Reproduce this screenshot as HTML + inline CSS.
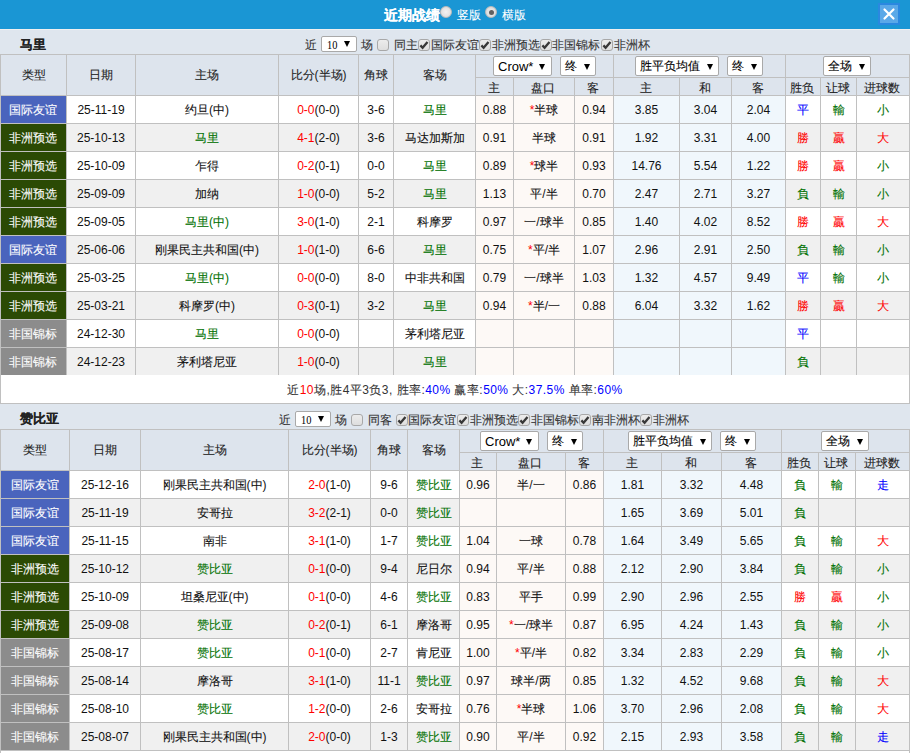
<!DOCTYPE html>
<html><head><meta charset="utf-8"><style>
html,body{margin:0;padding:0;background:#fff}
body{width:910px;height:753px;overflow:hidden;position:relative;font-family:"Liberation Sans",sans-serif;font-size:12px;color:#333}
.c{position:static;-webkit-text-stroke:0.1px currentColor}
div,span{position:absolute;white-space:nowrap}
div span,div b,div i{position:static}
b.arr{font-weight:normal;font-size:10px;position:absolute;right:5px;top:0}
i.ck{position:absolute;left:1px;top:0px;width:7px;height:4px;border-left:2px solid #444;border-bottom:2px solid #444;transform:rotate(-50deg);left:2px;top:2px}
</style></head><body>
<div style="left:0px;top:0px;width:910px;height:29px;background:#1a96d4"></div>
<span style="left:384px;top:6px;font-weight:bold;font-size:14px;color:#fff;line-height:18px"><span class="c">近期战绩</span></span>
<div style="left:440px;top:6px;width:12px;height:12px;border-radius:50%;background:radial-gradient(#f2f2f2,#d8d8d8);box-sizing:border-box;border:1px solid #bbb"></div>
<span style="left:457px;top:7px;font-size:12px;color:#fff;line-height:16px"><span class="c">竖版</span></span>
<div style="left:485px;top:6px;width:12px;height:12px;border-radius:50%;background:radial-gradient(#f0f0f0,#d4d4d4);box-sizing:border-box;border:1px solid #bbb"><i style="position:absolute;left:2.5px;top:2.5px;width:5px;height:5px;border-radius:50%;background:#606060"></i></div>
<span style="left:502px;top:7px;font-size:12px;color:#fff;line-height:16px"><span class="c">横版</span></span>
<div style="left:878px;top:3px;width:22px;height:22px;background:#5aa8e8;border:2px solid #2a88e0;box-sizing:border-box"><svg width="18" height="18" viewBox="0 0 18 18" style="position:absolute;left:0;top:0"><path d="M4.5 4.5L13.5 13.5M13.5 4.5L4.5 13.5" stroke="#fff" stroke-width="2.2" stroke-linecap="round"/></svg></div>
<div style="left:0px;top:29px;width:910px;height:1px;background:#f0f0f0"></div>
<div style="left:0px;top:30px;width:910px;height:24px;background:#dfe6ee"></div>
<span style="left:20px;top:37px;font-weight:bold;font-size:13px;color:#222;line-height:16px"><span class="c">马里</span></span>
<span style="left:305px;top:38px;font-size:12px;color:#333;line-height:14px"><span class="c">近</span></span>
<div style="left:321px;top:36px;width:36px;height:16px;background:#fff;border:1px solid #a9a9a9;border-radius:2px;box-sizing:border-box"><span style="position:absolute;left:5px;top:0px;line-height:16px;font-family:Liberation Serif,serif;font-size:13px;color:#000;display:inline-block;transform:scaleX(0.8);transform-origin:0 0">10</span><svg width="6" height="6" viewBox="0 0 6 6" style="position:absolute;left:22px;top:4px"><path d="M0 0H6L3.0 6Z" fill="#000"/></svg></div>
<span style="left:361px;top:38px;font-size:12px;color:#333;line-height:14px"><span class="c">场</span></span>
<div style="left:377px;top:39px;width:12px;height:12px;background:linear-gradient(#ececec,#dedede);border:1px solid #a8a8a8;border-radius:3px;box-sizing:border-box"></div>
<span style="left:394px;top:38px;font-size:12px;color:#333;line-height:14px"><span class="c">同主</span></span>
<div style="left:418px;top:39px;width:12px;height:12px;background:linear-gradient(#ececec,#dedede);border:1px solid #a8a8a8;border-radius:3px;box-sizing:border-box"><svg width="12" height="12" viewBox="0 0 12 12" style="position:absolute;left:-1px;top:-1px"><path d="M2.4 6.4L4.6 8.8L9.5 2.9" stroke="#383838" stroke-width="2.3" fill="none" stroke-linecap="butt" stroke-linejoin="miter"/></svg></div>
<span style="left:431px;top:38px;font-size:12px;color:#333;line-height:14px"><span class="c">国际友谊</span></span>
<div style="left:479px;top:39px;width:12px;height:12px;background:linear-gradient(#ececec,#dedede);border:1px solid #a8a8a8;border-radius:3px;box-sizing:border-box"><svg width="12" height="12" viewBox="0 0 12 12" style="position:absolute;left:-1px;top:-1px"><path d="M2.4 6.4L4.6 8.8L9.5 2.9" stroke="#383838" stroke-width="2.3" fill="none" stroke-linecap="butt" stroke-linejoin="miter"/></svg></div>
<span style="left:492px;top:38px;font-size:12px;color:#333;line-height:14px"><span class="c">非洲预选</span></span>
<div style="left:540px;top:39px;width:12px;height:12px;background:linear-gradient(#ececec,#dedede);border:1px solid #a8a8a8;border-radius:3px;box-sizing:border-box"><svg width="12" height="12" viewBox="0 0 12 12" style="position:absolute;left:-1px;top:-1px"><path d="M2.4 6.4L4.6 8.8L9.5 2.9" stroke="#383838" stroke-width="2.3" fill="none" stroke-linecap="butt" stroke-linejoin="miter"/></svg></div>
<span style="left:552px;top:38px;font-size:12px;color:#333;line-height:14px"><span class="c">非国锦标</span></span>
<div style="left:601px;top:39px;width:12px;height:12px;background:linear-gradient(#ececec,#dedede);border:1px solid #a8a8a8;border-radius:3px;box-sizing:border-box"><svg width="12" height="12" viewBox="0 0 12 12" style="position:absolute;left:-1px;top:-1px"><path d="M2.4 6.4L4.6 8.8L9.5 2.9" stroke="#383838" stroke-width="2.3" fill="none" stroke-linecap="butt" stroke-linejoin="miter"/></svg></div>
<span style="left:614px;top:38px;font-size:12px;color:#333;line-height:14px"><span class="c">非洲杯</span></span>
<div style="left:0px;top:54px;width:910px;height:41px;background:#dde4ed"></div>
<div style="left:0px;top:95px;width:910px;height:28px;background:#ffffff"></div>
<div style="left:475px;top:95px;width:138px;height:28px;background:#fdf9f6"></div>
<div style="left:613px;top:95px;width:172px;height:28px;background:#f0f7fc"></div>
<div style="left:1px;top:96px;width:65px;height:27px;background:#4a64bd"></div>
<div style="left:0px;top:123px;width:910px;height:28px;background:#f0f0f0"></div>
<div style="left:475px;top:123px;width:138px;height:28px;background:#fdf9f6"></div>
<div style="left:613px;top:123px;width:172px;height:28px;background:#f0f7fc"></div>
<div style="left:1px;top:124px;width:65px;height:27px;background:#2b4a04"></div>
<div style="left:0px;top:151px;width:910px;height:28px;background:#ffffff"></div>
<div style="left:475px;top:151px;width:138px;height:28px;background:#fdf9f6"></div>
<div style="left:613px;top:151px;width:172px;height:28px;background:#f0f7fc"></div>
<div style="left:1px;top:152px;width:65px;height:27px;background:#2b4a04"></div>
<div style="left:0px;top:179px;width:910px;height:28px;background:#f0f0f0"></div>
<div style="left:475px;top:179px;width:138px;height:28px;background:#fdf9f6"></div>
<div style="left:613px;top:179px;width:172px;height:28px;background:#f0f7fc"></div>
<div style="left:1px;top:180px;width:65px;height:27px;background:#2b4a04"></div>
<div style="left:0px;top:207px;width:910px;height:28px;background:#ffffff"></div>
<div style="left:475px;top:207px;width:138px;height:28px;background:#fdf9f6"></div>
<div style="left:613px;top:207px;width:172px;height:28px;background:#f0f7fc"></div>
<div style="left:1px;top:208px;width:65px;height:27px;background:#2b4a04"></div>
<div style="left:0px;top:235px;width:910px;height:28px;background:#f0f0f0"></div>
<div style="left:475px;top:235px;width:138px;height:28px;background:#fdf9f6"></div>
<div style="left:613px;top:235px;width:172px;height:28px;background:#f0f7fc"></div>
<div style="left:1px;top:236px;width:65px;height:27px;background:#4a64bd"></div>
<div style="left:0px;top:263px;width:910px;height:28px;background:#ffffff"></div>
<div style="left:475px;top:263px;width:138px;height:28px;background:#fdf9f6"></div>
<div style="left:613px;top:263px;width:172px;height:28px;background:#f0f7fc"></div>
<div style="left:1px;top:264px;width:65px;height:27px;background:#2b4a04"></div>
<div style="left:0px;top:291px;width:910px;height:28px;background:#f0f0f0"></div>
<div style="left:475px;top:291px;width:138px;height:28px;background:#fdf9f6"></div>
<div style="left:613px;top:291px;width:172px;height:28px;background:#f0f7fc"></div>
<div style="left:1px;top:292px;width:65px;height:27px;background:#2b4a04"></div>
<div style="left:0px;top:319px;width:910px;height:28px;background:#ffffff"></div>
<div style="left:475px;top:319px;width:138px;height:28px;background:#fdf9f6"></div>
<div style="left:613px;top:319px;width:172px;height:28px;background:#f0f7fc"></div>
<div style="left:1px;top:320px;width:65px;height:27px;background:#8c8c8c"></div>
<div style="left:0px;top:347px;width:910px;height:28px;background:#f0f0f0"></div>
<div style="left:475px;top:347px;width:138px;height:28px;background:#fdf9f6"></div>
<div style="left:613px;top:347px;width:172px;height:28px;background:#f0f7fc"></div>
<div style="left:1px;top:348px;width:65px;height:27px;background:#8c8c8c"></div>
<div style="left:0px;top:54px;width:910px;height:1px;background:#c0c0c0"></div>
<div style="left:475px;top:77px;width:434px;height:1px;background:#c0c0c0"></div>
<div style="left:0px;top:95px;width:910px;height:1px;background:#c0c0c0"></div>
<div style="left:0px;top:123px;width:910px;height:1px;background:#c0c0c0"></div>
<div style="left:0px;top:151px;width:910px;height:1px;background:#c0c0c0"></div>
<div style="left:0px;top:179px;width:910px;height:1px;background:#c0c0c0"></div>
<div style="left:0px;top:207px;width:910px;height:1px;background:#c0c0c0"></div>
<div style="left:0px;top:235px;width:910px;height:1px;background:#c0c0c0"></div>
<div style="left:0px;top:263px;width:910px;height:1px;background:#c0c0c0"></div>
<div style="left:0px;top:291px;width:910px;height:1px;background:#c0c0c0"></div>
<div style="left:0px;top:319px;width:910px;height:1px;background:#c0c0c0"></div>
<div style="left:0px;top:347px;width:910px;height:1px;background:#c0c0c0"></div>
<div style="left:0px;top:375px;width:910px;height:1px;background:#c0c0c0"></div>
<div style="left:0px;top:54px;width:1px;height:322px;background:#c0c0c0"></div>
<div style="left:66px;top:54px;width:1px;height:322px;background:#c0c0c0"></div>
<div style="left:135px;top:54px;width:1px;height:322px;background:#c0c0c0"></div>
<div style="left:278px;top:54px;width:1px;height:322px;background:#c0c0c0"></div>
<div style="left:358px;top:54px;width:1px;height:322px;background:#c0c0c0"></div>
<div style="left:393px;top:54px;width:1px;height:322px;background:#c0c0c0"></div>
<div style="left:475px;top:54px;width:1px;height:322px;background:#c0c0c0"></div>
<div style="left:513px;top:77px;width:1px;height:299px;background:#c0c0c0"></div>
<div style="left:574px;top:77px;width:1px;height:299px;background:#c0c0c0"></div>
<div style="left:613px;top:54px;width:1px;height:322px;background:#c0c0c0"></div>
<div style="left:679px;top:77px;width:1px;height:299px;background:#c0c0c0"></div>
<div style="left:731px;top:77px;width:1px;height:299px;background:#c0c0c0"></div>
<div style="left:785px;top:54px;width:1px;height:322px;background:#c0c0c0"></div>
<div style="left:820px;top:77px;width:1px;height:299px;background:#c0c0c0"></div>
<div style="left:856px;top:77px;width:1px;height:299px;background:#c0c0c0"></div>
<div style="left:909px;top:54px;width:1px;height:322px;background:#c0c0c0"></div>
<div style="left:1px;top:55px;width:65px;height:40px;line-height:40px;text-align:center;font-size:12px;color:#222"><span class="c">类型</span></div>
<div style="left:67px;top:55px;width:68px;height:40px;line-height:40px;text-align:center;font-size:12px;color:#222"><span class="c">日期</span></div>
<div style="left:136px;top:55px;width:142px;height:40px;line-height:40px;text-align:center;font-size:12px;color:#222"><span class="c">主场</span></div>
<div style="left:279px;top:55px;width:79px;height:40px;line-height:40px;text-align:center;font-size:12px;color:#222"><span class="c">比分</span>(<span class="c">半场</span>)</div>
<div style="left:359px;top:55px;width:34px;height:40px;line-height:40px;text-align:center;font-size:12px;color:#222"><span class="c">角球</span></div>
<div style="left:394px;top:55px;width:81px;height:40px;line-height:40px;text-align:center;font-size:12px;color:#222"><span class="c">客场</span></div>
<div style="left:475px;top:80px;width:37px;height:17px;line-height:17px;text-align:center;font-size:12px;color:#222"><span class="c">主</span></div>
<div style="left:513px;top:80px;width:60px;height:17px;line-height:17px;text-align:center;font-size:12px;color:#222"><span class="c">盘口</span></div>
<div style="left:574px;top:80px;width:38px;height:17px;line-height:17px;text-align:center;font-size:12px;color:#222"><span class="c">客</span></div>
<div style="left:613px;top:80px;width:65px;height:17px;line-height:17px;text-align:center;font-size:12px;color:#222"><span class="c">主</span></div>
<div style="left:679px;top:80px;width:51px;height:17px;line-height:17px;text-align:center;font-size:12px;color:#222"><span class="c">和</span></div>
<div style="left:731px;top:80px;width:53px;height:17px;line-height:17px;text-align:center;font-size:12px;color:#222"><span class="c">客</span></div>
<div style="left:785px;top:80px;width:34px;height:17px;line-height:17px;text-align:center;font-size:12px;color:#222"><span class="c">胜负</span></div>
<div style="left:820px;top:80px;width:35px;height:17px;line-height:17px;text-align:center;font-size:12px;color:#222"><span class="c">让球</span></div>
<div style="left:856px;top:80px;width:52px;height:17px;line-height:17px;text-align:center;font-size:12px;color:#222"><span class="c">进球数</span></div>
<div style="left:0px;top:97px;width:65px;height:27px;line-height:27px;text-align:center;font-size:12px;color:#fff"><span class="c">国际友谊</span></div>
<div style="left:67px;top:97px;width:68px;height:27px;line-height:27px;text-align:center;font-size:12px;color:#111">25-11-19</div>
<div style="left:136px;top:97px;width:142px;height:27px;line-height:27px;text-align:center;font-size:12px;color:#111"><span class="c">约旦</span>(<span class="c">中</span>)</div>
<div style="left:279px;top:97px;width:79px;height:27px;line-height:27px;text-align:center;font-size:12px;color:#111"><span style="color:#ff0000">0-0</span>(0-0)</div>
<div style="left:359px;top:97px;width:34px;height:27px;line-height:27px;text-align:center;font-size:12px;color:#111">3-6</div>
<div style="left:394px;top:97px;width:81px;height:27px;line-height:27px;text-align:center;font-size:12px;color:#111;color:#007000"><span class="c">马里</span></div>
<div style="left:476px;top:97px;width:37px;height:27px;line-height:27px;text-align:center;font-size:12px;color:#111">0.88</div>
<div style="left:514px;top:97px;width:60px;height:27px;line-height:27px;text-align:center;font-size:12px;color:#111"><span style="color:#ff0000">*</span><span class="c">半球</span></div>
<div style="left:575px;top:97px;width:38px;height:27px;line-height:27px;text-align:center;font-size:12px;color:#111">0.94</div>
<div style="left:614px;top:97px;width:65px;height:27px;line-height:27px;text-align:center;font-size:12px;color:#111">3.85</div>
<div style="left:680px;top:97px;width:51px;height:27px;line-height:27px;text-align:center;font-size:12px;color:#111">3.04</div>
<div style="left:732px;top:97px;width:53px;height:27px;line-height:27px;text-align:center;font-size:12px;color:#111">2.04</div>
<div style="left:786px;top:97px;width:34px;height:27px;line-height:27px;text-align:center;font-size:12px;color:#111;color:#0000ff"><span class="c">平</span></div>
<div style="left:821px;top:97px;width:35px;height:27px;line-height:27px;text-align:center;font-size:12px;color:#111;color:#007000"><span class="c">輸</span></div>
<div style="left:857px;top:97px;width:52px;height:27px;line-height:27px;text-align:center;font-size:12px;color:#111;color:#007000"><span class="c">小</span></div>
<div style="left:0px;top:125px;width:65px;height:27px;line-height:27px;text-align:center;font-size:12px;color:#fff"><span class="c">非洲预选</span></div>
<div style="left:67px;top:125px;width:68px;height:27px;line-height:27px;text-align:center;font-size:12px;color:#111">25-10-13</div>
<div style="left:136px;top:125px;width:142px;height:27px;line-height:27px;text-align:center;font-size:12px;color:#111;color:#007000"><span class="c">马里</span></div>
<div style="left:279px;top:125px;width:79px;height:27px;line-height:27px;text-align:center;font-size:12px;color:#111"><span style="color:#ff0000">4-1</span>(2-0)</div>
<div style="left:359px;top:125px;width:34px;height:27px;line-height:27px;text-align:center;font-size:12px;color:#111">3-6</div>
<div style="left:394px;top:125px;width:81px;height:27px;line-height:27px;text-align:center;font-size:12px;color:#111"><span class="c">马达加斯加</span></div>
<div style="left:476px;top:125px;width:37px;height:27px;line-height:27px;text-align:center;font-size:12px;color:#111">0.91</div>
<div style="left:514px;top:125px;width:60px;height:27px;line-height:27px;text-align:center;font-size:12px;color:#111"><span class="c">半球</span></div>
<div style="left:575px;top:125px;width:38px;height:27px;line-height:27px;text-align:center;font-size:12px;color:#111">0.91</div>
<div style="left:614px;top:125px;width:65px;height:27px;line-height:27px;text-align:center;font-size:12px;color:#111">1.92</div>
<div style="left:680px;top:125px;width:51px;height:27px;line-height:27px;text-align:center;font-size:12px;color:#111">3.31</div>
<div style="left:732px;top:125px;width:53px;height:27px;line-height:27px;text-align:center;font-size:12px;color:#111">4.00</div>
<div style="left:786px;top:125px;width:34px;height:27px;line-height:27px;text-align:center;font-size:12px;color:#111;color:#ff0000"><span class="c">勝</span></div>
<div style="left:821px;top:125px;width:35px;height:27px;line-height:27px;text-align:center;font-size:12px;color:#111;color:#ff0000"><span class="c">贏</span></div>
<div style="left:857px;top:125px;width:52px;height:27px;line-height:27px;text-align:center;font-size:12px;color:#111;color:#ff0000"><span class="c">大</span></div>
<div style="left:0px;top:153px;width:65px;height:27px;line-height:27px;text-align:center;font-size:12px;color:#fff"><span class="c">非洲预选</span></div>
<div style="left:67px;top:153px;width:68px;height:27px;line-height:27px;text-align:center;font-size:12px;color:#111">25-10-09</div>
<div style="left:136px;top:153px;width:142px;height:27px;line-height:27px;text-align:center;font-size:12px;color:#111"><span class="c">乍得</span></div>
<div style="left:279px;top:153px;width:79px;height:27px;line-height:27px;text-align:center;font-size:12px;color:#111"><span style="color:#ff0000">0-2</span>(0-1)</div>
<div style="left:359px;top:153px;width:34px;height:27px;line-height:27px;text-align:center;font-size:12px;color:#111">0-0</div>
<div style="left:394px;top:153px;width:81px;height:27px;line-height:27px;text-align:center;font-size:12px;color:#111;color:#007000"><span class="c">马里</span></div>
<div style="left:476px;top:153px;width:37px;height:27px;line-height:27px;text-align:center;font-size:12px;color:#111">0.89</div>
<div style="left:514px;top:153px;width:60px;height:27px;line-height:27px;text-align:center;font-size:12px;color:#111"><span style="color:#ff0000">*</span><span class="c">球半</span></div>
<div style="left:575px;top:153px;width:38px;height:27px;line-height:27px;text-align:center;font-size:12px;color:#111">0.93</div>
<div style="left:614px;top:153px;width:65px;height:27px;line-height:27px;text-align:center;font-size:12px;color:#111">14.76</div>
<div style="left:680px;top:153px;width:51px;height:27px;line-height:27px;text-align:center;font-size:12px;color:#111">5.54</div>
<div style="left:732px;top:153px;width:53px;height:27px;line-height:27px;text-align:center;font-size:12px;color:#111">1.22</div>
<div style="left:786px;top:153px;width:34px;height:27px;line-height:27px;text-align:center;font-size:12px;color:#111;color:#ff0000"><span class="c">勝</span></div>
<div style="left:821px;top:153px;width:35px;height:27px;line-height:27px;text-align:center;font-size:12px;color:#111;color:#ff0000"><span class="c">贏</span></div>
<div style="left:857px;top:153px;width:52px;height:27px;line-height:27px;text-align:center;font-size:12px;color:#111;color:#007000"><span class="c">小</span></div>
<div style="left:0px;top:181px;width:65px;height:27px;line-height:27px;text-align:center;font-size:12px;color:#fff"><span class="c">非洲预选</span></div>
<div style="left:67px;top:181px;width:68px;height:27px;line-height:27px;text-align:center;font-size:12px;color:#111">25-09-09</div>
<div style="left:136px;top:181px;width:142px;height:27px;line-height:27px;text-align:center;font-size:12px;color:#111"><span class="c">加纳</span></div>
<div style="left:279px;top:181px;width:79px;height:27px;line-height:27px;text-align:center;font-size:12px;color:#111"><span style="color:#ff0000">1-0</span>(0-0)</div>
<div style="left:359px;top:181px;width:34px;height:27px;line-height:27px;text-align:center;font-size:12px;color:#111">5-2</div>
<div style="left:394px;top:181px;width:81px;height:27px;line-height:27px;text-align:center;font-size:12px;color:#111;color:#007000"><span class="c">马里</span></div>
<div style="left:476px;top:181px;width:37px;height:27px;line-height:27px;text-align:center;font-size:12px;color:#111">1.13</div>
<div style="left:514px;top:181px;width:60px;height:27px;line-height:27px;text-align:center;font-size:12px;color:#111"><span class="c">平</span>/<span class="c">半</span></div>
<div style="left:575px;top:181px;width:38px;height:27px;line-height:27px;text-align:center;font-size:12px;color:#111">0.70</div>
<div style="left:614px;top:181px;width:65px;height:27px;line-height:27px;text-align:center;font-size:12px;color:#111">2.47</div>
<div style="left:680px;top:181px;width:51px;height:27px;line-height:27px;text-align:center;font-size:12px;color:#111">2.71</div>
<div style="left:732px;top:181px;width:53px;height:27px;line-height:27px;text-align:center;font-size:12px;color:#111">3.27</div>
<div style="left:786px;top:181px;width:34px;height:27px;line-height:27px;text-align:center;font-size:12px;color:#111;color:#007000"><span class="c">負</span></div>
<div style="left:821px;top:181px;width:35px;height:27px;line-height:27px;text-align:center;font-size:12px;color:#111;color:#007000"><span class="c">輸</span></div>
<div style="left:857px;top:181px;width:52px;height:27px;line-height:27px;text-align:center;font-size:12px;color:#111;color:#007000"><span class="c">小</span></div>
<div style="left:0px;top:209px;width:65px;height:27px;line-height:27px;text-align:center;font-size:12px;color:#fff"><span class="c">非洲预选</span></div>
<div style="left:67px;top:209px;width:68px;height:27px;line-height:27px;text-align:center;font-size:12px;color:#111">25-09-05</div>
<div style="left:136px;top:209px;width:142px;height:27px;line-height:27px;text-align:center;font-size:12px;color:#111;color:#007000"><span class="c">马里</span>(<span class="c">中</span>)</div>
<div style="left:279px;top:209px;width:79px;height:27px;line-height:27px;text-align:center;font-size:12px;color:#111"><span style="color:#ff0000">3-0</span>(1-0)</div>
<div style="left:359px;top:209px;width:34px;height:27px;line-height:27px;text-align:center;font-size:12px;color:#111">2-1</div>
<div style="left:394px;top:209px;width:81px;height:27px;line-height:27px;text-align:center;font-size:12px;color:#111"><span class="c">科摩罗</span></div>
<div style="left:476px;top:209px;width:37px;height:27px;line-height:27px;text-align:center;font-size:12px;color:#111">0.97</div>
<div style="left:514px;top:209px;width:60px;height:27px;line-height:27px;text-align:center;font-size:12px;color:#111"><span class="c">一</span>/<span class="c">球半</span></div>
<div style="left:575px;top:209px;width:38px;height:27px;line-height:27px;text-align:center;font-size:12px;color:#111">0.85</div>
<div style="left:614px;top:209px;width:65px;height:27px;line-height:27px;text-align:center;font-size:12px;color:#111">1.40</div>
<div style="left:680px;top:209px;width:51px;height:27px;line-height:27px;text-align:center;font-size:12px;color:#111">4.02</div>
<div style="left:732px;top:209px;width:53px;height:27px;line-height:27px;text-align:center;font-size:12px;color:#111">8.52</div>
<div style="left:786px;top:209px;width:34px;height:27px;line-height:27px;text-align:center;font-size:12px;color:#111;color:#ff0000"><span class="c">勝</span></div>
<div style="left:821px;top:209px;width:35px;height:27px;line-height:27px;text-align:center;font-size:12px;color:#111;color:#ff0000"><span class="c">贏</span></div>
<div style="left:857px;top:209px;width:52px;height:27px;line-height:27px;text-align:center;font-size:12px;color:#111;color:#ff0000"><span class="c">大</span></div>
<div style="left:0px;top:237px;width:65px;height:27px;line-height:27px;text-align:center;font-size:12px;color:#fff"><span class="c">国际友谊</span></div>
<div style="left:67px;top:237px;width:68px;height:27px;line-height:27px;text-align:center;font-size:12px;color:#111">25-06-06</div>
<div style="left:136px;top:237px;width:142px;height:27px;line-height:27px;text-align:center;font-size:12px;color:#111"><span class="c">刚果民主共和国</span>(<span class="c">中</span>)</div>
<div style="left:279px;top:237px;width:79px;height:27px;line-height:27px;text-align:center;font-size:12px;color:#111"><span style="color:#ff0000">1-0</span>(1-0)</div>
<div style="left:359px;top:237px;width:34px;height:27px;line-height:27px;text-align:center;font-size:12px;color:#111">6-6</div>
<div style="left:394px;top:237px;width:81px;height:27px;line-height:27px;text-align:center;font-size:12px;color:#111;color:#007000"><span class="c">马里</span></div>
<div style="left:476px;top:237px;width:37px;height:27px;line-height:27px;text-align:center;font-size:12px;color:#111">0.75</div>
<div style="left:514px;top:237px;width:60px;height:27px;line-height:27px;text-align:center;font-size:12px;color:#111"><span style="color:#ff0000">*</span><span class="c">平</span>/<span class="c">半</span></div>
<div style="left:575px;top:237px;width:38px;height:27px;line-height:27px;text-align:center;font-size:12px;color:#111">1.07</div>
<div style="left:614px;top:237px;width:65px;height:27px;line-height:27px;text-align:center;font-size:12px;color:#111">2.96</div>
<div style="left:680px;top:237px;width:51px;height:27px;line-height:27px;text-align:center;font-size:12px;color:#111">2.91</div>
<div style="left:732px;top:237px;width:53px;height:27px;line-height:27px;text-align:center;font-size:12px;color:#111">2.50</div>
<div style="left:786px;top:237px;width:34px;height:27px;line-height:27px;text-align:center;font-size:12px;color:#111;color:#007000"><span class="c">負</span></div>
<div style="left:821px;top:237px;width:35px;height:27px;line-height:27px;text-align:center;font-size:12px;color:#111;color:#007000"><span class="c">輸</span></div>
<div style="left:857px;top:237px;width:52px;height:27px;line-height:27px;text-align:center;font-size:12px;color:#111;color:#007000"><span class="c">小</span></div>
<div style="left:0px;top:265px;width:65px;height:27px;line-height:27px;text-align:center;font-size:12px;color:#fff"><span class="c">非洲预选</span></div>
<div style="left:67px;top:265px;width:68px;height:27px;line-height:27px;text-align:center;font-size:12px;color:#111">25-03-25</div>
<div style="left:136px;top:265px;width:142px;height:27px;line-height:27px;text-align:center;font-size:12px;color:#111;color:#007000"><span class="c">马里</span>(<span class="c">中</span>)</div>
<div style="left:279px;top:265px;width:79px;height:27px;line-height:27px;text-align:center;font-size:12px;color:#111"><span style="color:#ff0000">0-0</span>(0-0)</div>
<div style="left:359px;top:265px;width:34px;height:27px;line-height:27px;text-align:center;font-size:12px;color:#111">8-0</div>
<div style="left:394px;top:265px;width:81px;height:27px;line-height:27px;text-align:center;font-size:12px;color:#111"><span class="c">中非共和国</span></div>
<div style="left:476px;top:265px;width:37px;height:27px;line-height:27px;text-align:center;font-size:12px;color:#111">0.79</div>
<div style="left:514px;top:265px;width:60px;height:27px;line-height:27px;text-align:center;font-size:12px;color:#111"><span class="c">一</span>/<span class="c">球半</span></div>
<div style="left:575px;top:265px;width:38px;height:27px;line-height:27px;text-align:center;font-size:12px;color:#111">1.03</div>
<div style="left:614px;top:265px;width:65px;height:27px;line-height:27px;text-align:center;font-size:12px;color:#111">1.32</div>
<div style="left:680px;top:265px;width:51px;height:27px;line-height:27px;text-align:center;font-size:12px;color:#111">4.57</div>
<div style="left:732px;top:265px;width:53px;height:27px;line-height:27px;text-align:center;font-size:12px;color:#111">9.49</div>
<div style="left:786px;top:265px;width:34px;height:27px;line-height:27px;text-align:center;font-size:12px;color:#111;color:#0000ff"><span class="c">平</span></div>
<div style="left:821px;top:265px;width:35px;height:27px;line-height:27px;text-align:center;font-size:12px;color:#111;color:#007000"><span class="c">輸</span></div>
<div style="left:857px;top:265px;width:52px;height:27px;line-height:27px;text-align:center;font-size:12px;color:#111;color:#007000"><span class="c">小</span></div>
<div style="left:0px;top:293px;width:65px;height:27px;line-height:27px;text-align:center;font-size:12px;color:#fff"><span class="c">非洲预选</span></div>
<div style="left:67px;top:293px;width:68px;height:27px;line-height:27px;text-align:center;font-size:12px;color:#111">25-03-21</div>
<div style="left:136px;top:293px;width:142px;height:27px;line-height:27px;text-align:center;font-size:12px;color:#111"><span class="c">科摩罗</span>(<span class="c">中</span>)</div>
<div style="left:279px;top:293px;width:79px;height:27px;line-height:27px;text-align:center;font-size:12px;color:#111"><span style="color:#ff0000">0-3</span>(0-1)</div>
<div style="left:359px;top:293px;width:34px;height:27px;line-height:27px;text-align:center;font-size:12px;color:#111">3-2</div>
<div style="left:394px;top:293px;width:81px;height:27px;line-height:27px;text-align:center;font-size:12px;color:#111;color:#007000"><span class="c">马里</span></div>
<div style="left:476px;top:293px;width:37px;height:27px;line-height:27px;text-align:center;font-size:12px;color:#111">0.94</div>
<div style="left:514px;top:293px;width:60px;height:27px;line-height:27px;text-align:center;font-size:12px;color:#111"><span style="color:#ff0000">*</span><span class="c">半</span>/<span class="c">一</span></div>
<div style="left:575px;top:293px;width:38px;height:27px;line-height:27px;text-align:center;font-size:12px;color:#111">0.88</div>
<div style="left:614px;top:293px;width:65px;height:27px;line-height:27px;text-align:center;font-size:12px;color:#111">6.04</div>
<div style="left:680px;top:293px;width:51px;height:27px;line-height:27px;text-align:center;font-size:12px;color:#111">3.32</div>
<div style="left:732px;top:293px;width:53px;height:27px;line-height:27px;text-align:center;font-size:12px;color:#111">1.62</div>
<div style="left:786px;top:293px;width:34px;height:27px;line-height:27px;text-align:center;font-size:12px;color:#111;color:#ff0000"><span class="c">勝</span></div>
<div style="left:821px;top:293px;width:35px;height:27px;line-height:27px;text-align:center;font-size:12px;color:#111;color:#ff0000"><span class="c">贏</span></div>
<div style="left:857px;top:293px;width:52px;height:27px;line-height:27px;text-align:center;font-size:12px;color:#111;color:#ff0000"><span class="c">大</span></div>
<div style="left:0px;top:321px;width:65px;height:27px;line-height:27px;text-align:center;font-size:12px;color:#fff"><span class="c">非国锦标</span></div>
<div style="left:67px;top:321px;width:68px;height:27px;line-height:27px;text-align:center;font-size:12px;color:#111">24-12-30</div>
<div style="left:136px;top:321px;width:142px;height:27px;line-height:27px;text-align:center;font-size:12px;color:#111;color:#007000"><span class="c">马里</span></div>
<div style="left:279px;top:321px;width:79px;height:27px;line-height:27px;text-align:center;font-size:12px;color:#111"><span style="color:#ff0000">0-0</span>(0-0)</div>
<div style="left:394px;top:321px;width:81px;height:27px;line-height:27px;text-align:center;font-size:12px;color:#111"><span class="c">茅利塔尼亚</span></div>
<div style="left:786px;top:321px;width:34px;height:27px;line-height:27px;text-align:center;font-size:12px;color:#111;color:#0000ff"><span class="c">平</span></div>
<div style="left:0px;top:349px;width:65px;height:27px;line-height:27px;text-align:center;font-size:12px;color:#fff"><span class="c">非国锦标</span></div>
<div style="left:67px;top:349px;width:68px;height:27px;line-height:27px;text-align:center;font-size:12px;color:#111">24-12-23</div>
<div style="left:136px;top:349px;width:142px;height:27px;line-height:27px;text-align:center;font-size:12px;color:#111"><span class="c">茅利塔尼亚</span></div>
<div style="left:279px;top:349px;width:79px;height:27px;line-height:27px;text-align:center;font-size:12px;color:#111"><span style="color:#ff0000">1-0</span>(0-0)</div>
<div style="left:394px;top:349px;width:81px;height:27px;line-height:27px;text-align:center;font-size:12px;color:#111;color:#007000"><span class="c">马里</span></div>
<div style="left:786px;top:349px;width:34px;height:27px;line-height:27px;text-align:center;font-size:12px;color:#111;color:#007000"><span class="c">負</span></div>
<div style="left:0px;top:375px;width:910px;height:28px;background:#fff"></div>
<div style="left:0px;top:375px;width:1px;height:28px;background:#c0c0c0"></div>
<div style="left:909px;top:375px;width:1px;height:28px;background:#c0c0c0"></div>
<div style="left:0px;top:403px;width:910px;height:1px;background:#c0c0c0"></div>
<div style="left:1px;top:377px;width:908px;height:27px;line-height:27px;text-align:center;font-size:12px;color:#333;letter-spacing:0.45px"><span class="c">近</span><span style="color:#f00">10</span><span class="c">场</span>,<span class="c">胜</span>4<span class="c">平</span>3<span class="c">负</span>3, <span class="c">胜率</span>:<span style="color:#00f">40%</span> <span class="c">赢率</span>:<span style="color:#00f">50%</span> <span class="c">大</span>:<span style="color:#00f">37.5%</span> <span class="c">单率</span>:<span style="color:#00f">60%</span></div>
<div style="left:493px;top:56px;width:59px;height:20px;background:#fff;border:1px solid #a9a9a9;border-radius:2px;box-sizing:border-box"><span style="position:absolute;left:4px;top:0px;line-height:20px;font-size:13px;color:#000">Crow*</span><svg width="6" height="6" viewBox="0 0 6 6" style="position:absolute;left:45px;top:7px"><path d="M0 0H6L3.0 6Z" fill="#000"/></svg></div>
<div style="left:560px;top:56px;width:36px;height:20px;background:#fff;border:1px solid #a9a9a9;border-radius:2px;box-sizing:border-box"><span style="position:absolute;left:4px;top:-1px;line-height:20px;font-size:12px;color:#000"><span class="c">终</span></span><svg width="6" height="6" viewBox="0 0 6 6" style="position:absolute;left:23px;top:7px"><path d="M0 0H6L3.0 6Z" fill="#000"/></svg></div>
<div style="left:635px;top:56px;width:84px;height:20px;background:#fff;border:1px solid #a9a9a9;border-radius:2px;box-sizing:border-box"><span style="position:absolute;left:4px;top:-1px;line-height:20px;font-size:12px;color:#000"><span class="c">胜平负均值</span></span><svg width="6" height="6" viewBox="0 0 6 6" style="position:absolute;left:71px;top:7px"><path d="M0 0H6L3.0 6Z" fill="#000"/></svg></div>
<div style="left:727px;top:56px;width:36px;height:20px;background:#fff;border:1px solid #a9a9a9;border-radius:2px;box-sizing:border-box"><span style="position:absolute;left:4px;top:-1px;line-height:20px;font-size:12px;color:#000"><span class="c">终</span></span><svg width="6" height="6" viewBox="0 0 6 6" style="position:absolute;left:23px;top:7px"><path d="M0 0H6L3.0 6Z" fill="#000"/></svg></div>
<div style="left:823px;top:56px;width:48px;height:20px;background:#fff;border:1px solid #a9a9a9;border-radius:2px;box-sizing:border-box"><span style="position:absolute;left:4px;top:-1px;line-height:20px;font-size:12px;color:#000"><span class="c">全场</span></span><svg width="6" height="6" viewBox="0 0 6 6" style="position:absolute;left:35px;top:7px"><path d="M0 0H6L3.0 6Z" fill="#000"/></svg></div>
<div style="left:0px;top:404px;width:910px;height:25px;background:#dfe6ee"></div>
<span style="left:20px;top:411px;font-weight:bold;font-size:13px;color:#222;line-height:16px"><span class="c">赞比亚</span></span>
<span style="left:279px;top:413px;font-size:12px;color:#333;line-height:14px"><span class="c">近</span></span>
<div style="left:295px;top:411px;width:36px;height:16px;background:#fff;border:1px solid #a9a9a9;border-radius:2px;box-sizing:border-box"><span style="position:absolute;left:5px;top:0px;line-height:16px;font-family:Liberation Serif,serif;font-size:13px;color:#000;display:inline-block;transform:scaleX(0.8);transform-origin:0 0">10</span><svg width="6" height="6" viewBox="0 0 6 6" style="position:absolute;left:22px;top:4px"><path d="M0 0H6L3.0 6Z" fill="#000"/></svg></div>
<span style="left:335px;top:413px;font-size:12px;color:#333;line-height:14px"><span class="c">场</span></span>
<div style="left:351px;top:414px;width:12px;height:12px;background:linear-gradient(#ececec,#dedede);border:1px solid #a8a8a8;border-radius:3px;box-sizing:border-box"></div>
<span style="left:368px;top:413px;font-size:12px;color:#333;line-height:14px"><span class="c">同客</span></span>
<div style="left:396px;top:414px;width:12px;height:12px;background:linear-gradient(#ececec,#dedede);border:1px solid #a8a8a8;border-radius:3px;box-sizing:border-box"><svg width="12" height="12" viewBox="0 0 12 12" style="position:absolute;left:-1px;top:-1px"><path d="M2.4 6.4L4.6 8.8L9.5 2.9" stroke="#383838" stroke-width="2.3" fill="none" stroke-linecap="butt" stroke-linejoin="miter"/></svg></div>
<span style="left:408px;top:413px;font-size:12px;color:#333;line-height:14px"><span class="c">国际友谊</span></span>
<div style="left:457px;top:414px;width:12px;height:12px;background:linear-gradient(#ececec,#dedede);border:1px solid #a8a8a8;border-radius:3px;box-sizing:border-box"><svg width="12" height="12" viewBox="0 0 12 12" style="position:absolute;left:-1px;top:-1px"><path d="M2.4 6.4L4.6 8.8L9.5 2.9" stroke="#383838" stroke-width="2.3" fill="none" stroke-linecap="butt" stroke-linejoin="miter"/></svg></div>
<span style="left:470px;top:413px;font-size:12px;color:#333;line-height:14px"><span class="c">非洲预选</span></span>
<div style="left:518px;top:414px;width:12px;height:12px;background:linear-gradient(#ececec,#dedede);border:1px solid #a8a8a8;border-radius:3px;box-sizing:border-box"><svg width="12" height="12" viewBox="0 0 12 12" style="position:absolute;left:-1px;top:-1px"><path d="M2.4 6.4L4.6 8.8L9.5 2.9" stroke="#383838" stroke-width="2.3" fill="none" stroke-linecap="butt" stroke-linejoin="miter"/></svg></div>
<span style="left:531px;top:413px;font-size:12px;color:#333;line-height:14px"><span class="c">非国锦标</span></span>
<div style="left:579px;top:414px;width:12px;height:12px;background:linear-gradient(#ececec,#dedede);border:1px solid #a8a8a8;border-radius:3px;box-sizing:border-box"><svg width="12" height="12" viewBox="0 0 12 12" style="position:absolute;left:-1px;top:-1px"><path d="M2.4 6.4L4.6 8.8L9.5 2.9" stroke="#383838" stroke-width="2.3" fill="none" stroke-linecap="butt" stroke-linejoin="miter"/></svg></div>
<span style="left:592px;top:413px;font-size:12px;color:#333;line-height:14px"><span class="c">南非洲杯</span></span>
<div style="left:640px;top:414px;width:12px;height:12px;background:linear-gradient(#ececec,#dedede);border:1px solid #a8a8a8;border-radius:3px;box-sizing:border-box"><svg width="12" height="12" viewBox="0 0 12 12" style="position:absolute;left:-1px;top:-1px"><path d="M2.4 6.4L4.6 8.8L9.5 2.9" stroke="#383838" stroke-width="2.3" fill="none" stroke-linecap="butt" stroke-linejoin="miter"/></svg></div>
<span style="left:653px;top:413px;font-size:12px;color:#333;line-height:14px"><span class="c">非洲杯</span></span>
<div style="left:0px;top:429px;width:910px;height:41px;background:#dde4ed"></div>
<div style="left:0px;top:470px;width:910px;height:28px;background:#ffffff"></div>
<div style="left:459px;top:470px;width:144px;height:28px;background:#fdf9f6"></div>
<div style="left:603px;top:470px;width:178px;height:28px;background:#f0f7fc"></div>
<div style="left:1px;top:471px;width:68px;height:27px;background:#4a64bd"></div>
<div style="left:0px;top:498px;width:910px;height:28px;background:#f0f0f0"></div>
<div style="left:459px;top:498px;width:144px;height:28px;background:#fdf9f6"></div>
<div style="left:603px;top:498px;width:178px;height:28px;background:#f0f7fc"></div>
<div style="left:1px;top:499px;width:68px;height:27px;background:#4a64bd"></div>
<div style="left:0px;top:526px;width:910px;height:28px;background:#ffffff"></div>
<div style="left:459px;top:526px;width:144px;height:28px;background:#fdf9f6"></div>
<div style="left:603px;top:526px;width:178px;height:28px;background:#f0f7fc"></div>
<div style="left:1px;top:527px;width:68px;height:27px;background:#4a64bd"></div>
<div style="left:0px;top:554px;width:910px;height:28px;background:#f0f0f0"></div>
<div style="left:459px;top:554px;width:144px;height:28px;background:#fdf9f6"></div>
<div style="left:603px;top:554px;width:178px;height:28px;background:#f0f7fc"></div>
<div style="left:1px;top:555px;width:68px;height:27px;background:#2b4a04"></div>
<div style="left:0px;top:582px;width:910px;height:28px;background:#ffffff"></div>
<div style="left:459px;top:582px;width:144px;height:28px;background:#fdf9f6"></div>
<div style="left:603px;top:582px;width:178px;height:28px;background:#f0f7fc"></div>
<div style="left:1px;top:583px;width:68px;height:27px;background:#2b4a04"></div>
<div style="left:0px;top:610px;width:910px;height:28px;background:#f0f0f0"></div>
<div style="left:459px;top:610px;width:144px;height:28px;background:#fdf9f6"></div>
<div style="left:603px;top:610px;width:178px;height:28px;background:#f0f7fc"></div>
<div style="left:1px;top:611px;width:68px;height:27px;background:#2b4a04"></div>
<div style="left:0px;top:638px;width:910px;height:28px;background:#ffffff"></div>
<div style="left:459px;top:638px;width:144px;height:28px;background:#fdf9f6"></div>
<div style="left:603px;top:638px;width:178px;height:28px;background:#f0f7fc"></div>
<div style="left:1px;top:639px;width:68px;height:27px;background:#8c8c8c"></div>
<div style="left:0px;top:666px;width:910px;height:28px;background:#f0f0f0"></div>
<div style="left:459px;top:666px;width:144px;height:28px;background:#fdf9f6"></div>
<div style="left:603px;top:666px;width:178px;height:28px;background:#f0f7fc"></div>
<div style="left:1px;top:667px;width:68px;height:27px;background:#8c8c8c"></div>
<div style="left:0px;top:694px;width:910px;height:28px;background:#ffffff"></div>
<div style="left:459px;top:694px;width:144px;height:28px;background:#fdf9f6"></div>
<div style="left:603px;top:694px;width:178px;height:28px;background:#f0f7fc"></div>
<div style="left:1px;top:695px;width:68px;height:27px;background:#8c8c8c"></div>
<div style="left:0px;top:722px;width:910px;height:28px;background:#f0f0f0"></div>
<div style="left:459px;top:722px;width:144px;height:28px;background:#fdf9f6"></div>
<div style="left:603px;top:722px;width:178px;height:28px;background:#f0f7fc"></div>
<div style="left:1px;top:723px;width:68px;height:27px;background:#8c8c8c"></div>
<div style="left:0px;top:429px;width:910px;height:1px;background:#c0c0c0"></div>
<div style="left:459px;top:452px;width:450px;height:1px;background:#c0c0c0"></div>
<div style="left:0px;top:470px;width:910px;height:1px;background:#c0c0c0"></div>
<div style="left:0px;top:498px;width:910px;height:1px;background:#c0c0c0"></div>
<div style="left:0px;top:526px;width:910px;height:1px;background:#c0c0c0"></div>
<div style="left:0px;top:554px;width:910px;height:1px;background:#c0c0c0"></div>
<div style="left:0px;top:582px;width:910px;height:1px;background:#c0c0c0"></div>
<div style="left:0px;top:610px;width:910px;height:1px;background:#c0c0c0"></div>
<div style="left:0px;top:638px;width:910px;height:1px;background:#c0c0c0"></div>
<div style="left:0px;top:666px;width:910px;height:1px;background:#c0c0c0"></div>
<div style="left:0px;top:694px;width:910px;height:1px;background:#c0c0c0"></div>
<div style="left:0px;top:722px;width:910px;height:1px;background:#c0c0c0"></div>
<div style="left:0px;top:750px;width:910px;height:1px;background:#c0c0c0"></div>
<div style="left:0px;top:429px;width:1px;height:322px;background:#c0c0c0"></div>
<div style="left:69px;top:429px;width:1px;height:322px;background:#c0c0c0"></div>
<div style="left:140px;top:429px;width:1px;height:322px;background:#c0c0c0"></div>
<div style="left:288px;top:429px;width:1px;height:322px;background:#c0c0c0"></div>
<div style="left:370px;top:429px;width:1px;height:322px;background:#c0c0c0"></div>
<div style="left:407px;top:429px;width:1px;height:322px;background:#c0c0c0"></div>
<div style="left:459px;top:429px;width:1px;height:322px;background:#c0c0c0"></div>
<div style="left:496px;top:452px;width:1px;height:299px;background:#c0c0c0"></div>
<div style="left:565px;top:452px;width:1px;height:299px;background:#c0c0c0"></div>
<div style="left:603px;top:429px;width:1px;height:322px;background:#c0c0c0"></div>
<div style="left:661px;top:452px;width:1px;height:299px;background:#c0c0c0"></div>
<div style="left:721px;top:452px;width:1px;height:299px;background:#c0c0c0"></div>
<div style="left:781px;top:429px;width:1px;height:322px;background:#c0c0c0"></div>
<div style="left:818px;top:452px;width:1px;height:299px;background:#c0c0c0"></div>
<div style="left:855px;top:452px;width:1px;height:299px;background:#c0c0c0"></div>
<div style="left:909px;top:429px;width:1px;height:322px;background:#c0c0c0"></div>
<div style="left:1px;top:430px;width:68px;height:40px;line-height:40px;text-align:center;font-size:12px;color:#222"><span class="c">类型</span></div>
<div style="left:70px;top:430px;width:70px;height:40px;line-height:40px;text-align:center;font-size:12px;color:#222"><span class="c">日期</span></div>
<div style="left:141px;top:430px;width:147px;height:40px;line-height:40px;text-align:center;font-size:12px;color:#222"><span class="c">主场</span></div>
<div style="left:289px;top:430px;width:81px;height:40px;line-height:40px;text-align:center;font-size:12px;color:#222"><span class="c">比分</span>(<span class="c">半场</span>)</div>
<div style="left:371px;top:430px;width:36px;height:40px;line-height:40px;text-align:center;font-size:12px;color:#222"><span class="c">角球</span></div>
<div style="left:408px;top:430px;width:51px;height:40px;line-height:40px;text-align:center;font-size:12px;color:#222"><span class="c">客场</span></div>
<div style="left:459px;top:455px;width:36px;height:17px;line-height:17px;text-align:center;font-size:12px;color:#222"><span class="c">主</span></div>
<div style="left:496px;top:455px;width:68px;height:17px;line-height:17px;text-align:center;font-size:12px;color:#222"><span class="c">盘口</span></div>
<div style="left:565px;top:455px;width:37px;height:17px;line-height:17px;text-align:center;font-size:12px;color:#222"><span class="c">客</span></div>
<div style="left:603px;top:455px;width:57px;height:17px;line-height:17px;text-align:center;font-size:12px;color:#222"><span class="c">主</span></div>
<div style="left:661px;top:455px;width:59px;height:17px;line-height:17px;text-align:center;font-size:12px;color:#222"><span class="c">和</span></div>
<div style="left:721px;top:455px;width:59px;height:17px;line-height:17px;text-align:center;font-size:12px;color:#222"><span class="c">客</span></div>
<div style="left:781px;top:455px;width:36px;height:17px;line-height:17px;text-align:center;font-size:12px;color:#222"><span class="c">胜负</span></div>
<div style="left:818px;top:455px;width:36px;height:17px;line-height:17px;text-align:center;font-size:12px;color:#222"><span class="c">让球</span></div>
<div style="left:855px;top:455px;width:53px;height:17px;line-height:17px;text-align:center;font-size:12px;color:#222"><span class="c">进球数</span></div>
<div style="left:1px;top:472px;width:68px;height:27px;line-height:27px;text-align:center;font-size:12px;color:#fff"><span class="c">国际友谊</span></div>
<div style="left:70px;top:472px;width:70px;height:27px;line-height:27px;text-align:center;font-size:12px;color:#111">25-12-16</div>
<div style="left:141px;top:472px;width:147px;height:27px;line-height:27px;text-align:center;font-size:12px;color:#111"><span class="c">刚果民主共和国</span>(<span class="c">中</span>)</div>
<div style="left:289px;top:472px;width:81px;height:27px;line-height:27px;text-align:center;font-size:12px;color:#111"><span style="color:#ff0000">2-0</span>(1-0)</div>
<div style="left:371px;top:472px;width:36px;height:27px;line-height:27px;text-align:center;font-size:12px;color:#111">9-6</div>
<div style="left:408px;top:472px;width:51px;height:27px;line-height:27px;text-align:center;font-size:12px;color:#111;color:#007000"><span class="c">赞比亚</span></div>
<div style="left:460px;top:472px;width:36px;height:27px;line-height:27px;text-align:center;font-size:12px;color:#111">0.96</div>
<div style="left:497px;top:472px;width:68px;height:27px;line-height:27px;text-align:center;font-size:12px;color:#111"><span class="c">半</span>/<span class="c">一</span></div>
<div style="left:566px;top:472px;width:37px;height:27px;line-height:27px;text-align:center;font-size:12px;color:#111">0.86</div>
<div style="left:604px;top:472px;width:57px;height:27px;line-height:27px;text-align:center;font-size:12px;color:#111">1.81</div>
<div style="left:662px;top:472px;width:59px;height:27px;line-height:27px;text-align:center;font-size:12px;color:#111">3.32</div>
<div style="left:722px;top:472px;width:59px;height:27px;line-height:27px;text-align:center;font-size:12px;color:#111">4.48</div>
<div style="left:782px;top:472px;width:36px;height:27px;line-height:27px;text-align:center;font-size:12px;color:#111;color:#007000"><span class="c">負</span></div>
<div style="left:819px;top:472px;width:36px;height:27px;line-height:27px;text-align:center;font-size:12px;color:#111;color:#007000"><span class="c">輸</span></div>
<div style="left:856px;top:472px;width:53px;height:27px;line-height:27px;text-align:center;font-size:12px;color:#111;color:#0000ff"><span class="c">走</span></div>
<div style="left:1px;top:500px;width:68px;height:27px;line-height:27px;text-align:center;font-size:12px;color:#fff"><span class="c">国际友谊</span></div>
<div style="left:70px;top:500px;width:70px;height:27px;line-height:27px;text-align:center;font-size:12px;color:#111">25-11-19</div>
<div style="left:141px;top:500px;width:147px;height:27px;line-height:27px;text-align:center;font-size:12px;color:#111"><span class="c">安哥拉</span></div>
<div style="left:289px;top:500px;width:81px;height:27px;line-height:27px;text-align:center;font-size:12px;color:#111"><span style="color:#ff0000">3-2</span>(2-1)</div>
<div style="left:371px;top:500px;width:36px;height:27px;line-height:27px;text-align:center;font-size:12px;color:#111">0-0</div>
<div style="left:408px;top:500px;width:51px;height:27px;line-height:27px;text-align:center;font-size:12px;color:#111;color:#007000"><span class="c">赞比亚</span></div>
<div style="left:604px;top:500px;width:57px;height:27px;line-height:27px;text-align:center;font-size:12px;color:#111">1.65</div>
<div style="left:662px;top:500px;width:59px;height:27px;line-height:27px;text-align:center;font-size:12px;color:#111">3.69</div>
<div style="left:722px;top:500px;width:59px;height:27px;line-height:27px;text-align:center;font-size:12px;color:#111">5.01</div>
<div style="left:782px;top:500px;width:36px;height:27px;line-height:27px;text-align:center;font-size:12px;color:#111;color:#007000"><span class="c">負</span></div>
<div style="left:1px;top:528px;width:68px;height:27px;line-height:27px;text-align:center;font-size:12px;color:#fff"><span class="c">国际友谊</span></div>
<div style="left:70px;top:528px;width:70px;height:27px;line-height:27px;text-align:center;font-size:12px;color:#111">25-11-15</div>
<div style="left:141px;top:528px;width:147px;height:27px;line-height:27px;text-align:center;font-size:12px;color:#111"><span class="c">南非</span></div>
<div style="left:289px;top:528px;width:81px;height:27px;line-height:27px;text-align:center;font-size:12px;color:#111"><span style="color:#ff0000">3-1</span>(1-0)</div>
<div style="left:371px;top:528px;width:36px;height:27px;line-height:27px;text-align:center;font-size:12px;color:#111">1-7</div>
<div style="left:408px;top:528px;width:51px;height:27px;line-height:27px;text-align:center;font-size:12px;color:#111;color:#007000"><span class="c">赞比亚</span></div>
<div style="left:460px;top:528px;width:36px;height:27px;line-height:27px;text-align:center;font-size:12px;color:#111">1.04</div>
<div style="left:497px;top:528px;width:68px;height:27px;line-height:27px;text-align:center;font-size:12px;color:#111"><span class="c">一球</span></div>
<div style="left:566px;top:528px;width:37px;height:27px;line-height:27px;text-align:center;font-size:12px;color:#111">0.78</div>
<div style="left:604px;top:528px;width:57px;height:27px;line-height:27px;text-align:center;font-size:12px;color:#111">1.64</div>
<div style="left:662px;top:528px;width:59px;height:27px;line-height:27px;text-align:center;font-size:12px;color:#111">3.49</div>
<div style="left:722px;top:528px;width:59px;height:27px;line-height:27px;text-align:center;font-size:12px;color:#111">5.65</div>
<div style="left:782px;top:528px;width:36px;height:27px;line-height:27px;text-align:center;font-size:12px;color:#111;color:#007000"><span class="c">負</span></div>
<div style="left:819px;top:528px;width:36px;height:27px;line-height:27px;text-align:center;font-size:12px;color:#111;color:#007000"><span class="c">輸</span></div>
<div style="left:856px;top:528px;width:53px;height:27px;line-height:27px;text-align:center;font-size:12px;color:#111;color:#ff0000"><span class="c">大</span></div>
<div style="left:1px;top:556px;width:68px;height:27px;line-height:27px;text-align:center;font-size:12px;color:#fff"><span class="c">非洲预选</span></div>
<div style="left:70px;top:556px;width:70px;height:27px;line-height:27px;text-align:center;font-size:12px;color:#111">25-10-12</div>
<div style="left:141px;top:556px;width:147px;height:27px;line-height:27px;text-align:center;font-size:12px;color:#111;color:#007000"><span class="c">赞比亚</span></div>
<div style="left:289px;top:556px;width:81px;height:27px;line-height:27px;text-align:center;font-size:12px;color:#111"><span style="color:#ff0000">0-1</span>(0-0)</div>
<div style="left:371px;top:556px;width:36px;height:27px;line-height:27px;text-align:center;font-size:12px;color:#111">9-4</div>
<div style="left:408px;top:556px;width:51px;height:27px;line-height:27px;text-align:center;font-size:12px;color:#111"><span class="c">尼日尔</span></div>
<div style="left:460px;top:556px;width:36px;height:27px;line-height:27px;text-align:center;font-size:12px;color:#111">0.94</div>
<div style="left:497px;top:556px;width:68px;height:27px;line-height:27px;text-align:center;font-size:12px;color:#111"><span class="c">平</span>/<span class="c">半</span></div>
<div style="left:566px;top:556px;width:37px;height:27px;line-height:27px;text-align:center;font-size:12px;color:#111">0.88</div>
<div style="left:604px;top:556px;width:57px;height:27px;line-height:27px;text-align:center;font-size:12px;color:#111">2.12</div>
<div style="left:662px;top:556px;width:59px;height:27px;line-height:27px;text-align:center;font-size:12px;color:#111">2.90</div>
<div style="left:722px;top:556px;width:59px;height:27px;line-height:27px;text-align:center;font-size:12px;color:#111">3.84</div>
<div style="left:782px;top:556px;width:36px;height:27px;line-height:27px;text-align:center;font-size:12px;color:#111;color:#007000"><span class="c">負</span></div>
<div style="left:819px;top:556px;width:36px;height:27px;line-height:27px;text-align:center;font-size:12px;color:#111;color:#007000"><span class="c">輸</span></div>
<div style="left:856px;top:556px;width:53px;height:27px;line-height:27px;text-align:center;font-size:12px;color:#111;color:#007000"><span class="c">小</span></div>
<div style="left:1px;top:584px;width:68px;height:27px;line-height:27px;text-align:center;font-size:12px;color:#fff"><span class="c">非洲预选</span></div>
<div style="left:70px;top:584px;width:70px;height:27px;line-height:27px;text-align:center;font-size:12px;color:#111">25-10-09</div>
<div style="left:141px;top:584px;width:147px;height:27px;line-height:27px;text-align:center;font-size:12px;color:#111"><span class="c">坦桑尼亚</span>(<span class="c">中</span>)</div>
<div style="left:289px;top:584px;width:81px;height:27px;line-height:27px;text-align:center;font-size:12px;color:#111"><span style="color:#ff0000">0-1</span>(0-0)</div>
<div style="left:371px;top:584px;width:36px;height:27px;line-height:27px;text-align:center;font-size:12px;color:#111">4-6</div>
<div style="left:408px;top:584px;width:51px;height:27px;line-height:27px;text-align:center;font-size:12px;color:#111;color:#007000"><span class="c">赞比亚</span></div>
<div style="left:460px;top:584px;width:36px;height:27px;line-height:27px;text-align:center;font-size:12px;color:#111">0.83</div>
<div style="left:497px;top:584px;width:68px;height:27px;line-height:27px;text-align:center;font-size:12px;color:#111"><span class="c">平手</span></div>
<div style="left:566px;top:584px;width:37px;height:27px;line-height:27px;text-align:center;font-size:12px;color:#111">0.99</div>
<div style="left:604px;top:584px;width:57px;height:27px;line-height:27px;text-align:center;font-size:12px;color:#111">2.90</div>
<div style="left:662px;top:584px;width:59px;height:27px;line-height:27px;text-align:center;font-size:12px;color:#111">2.96</div>
<div style="left:722px;top:584px;width:59px;height:27px;line-height:27px;text-align:center;font-size:12px;color:#111">2.55</div>
<div style="left:782px;top:584px;width:36px;height:27px;line-height:27px;text-align:center;font-size:12px;color:#111;color:#ff0000"><span class="c">勝</span></div>
<div style="left:819px;top:584px;width:36px;height:27px;line-height:27px;text-align:center;font-size:12px;color:#111;color:#ff0000"><span class="c">贏</span></div>
<div style="left:856px;top:584px;width:53px;height:27px;line-height:27px;text-align:center;font-size:12px;color:#111;color:#007000"><span class="c">小</span></div>
<div style="left:1px;top:612px;width:68px;height:27px;line-height:27px;text-align:center;font-size:12px;color:#fff"><span class="c">非洲预选</span></div>
<div style="left:70px;top:612px;width:70px;height:27px;line-height:27px;text-align:center;font-size:12px;color:#111">25-09-08</div>
<div style="left:141px;top:612px;width:147px;height:27px;line-height:27px;text-align:center;font-size:12px;color:#111;color:#007000"><span class="c">赞比亚</span></div>
<div style="left:289px;top:612px;width:81px;height:27px;line-height:27px;text-align:center;font-size:12px;color:#111"><span style="color:#ff0000">0-2</span>(0-1)</div>
<div style="left:371px;top:612px;width:36px;height:27px;line-height:27px;text-align:center;font-size:12px;color:#111">6-1</div>
<div style="left:408px;top:612px;width:51px;height:27px;line-height:27px;text-align:center;font-size:12px;color:#111"><span class="c">摩洛哥</span></div>
<div style="left:460px;top:612px;width:36px;height:27px;line-height:27px;text-align:center;font-size:12px;color:#111">0.95</div>
<div style="left:497px;top:612px;width:68px;height:27px;line-height:27px;text-align:center;font-size:12px;color:#111"><span style="color:#ff0000">*</span><span class="c">一</span>/<span class="c">球半</span></div>
<div style="left:566px;top:612px;width:37px;height:27px;line-height:27px;text-align:center;font-size:12px;color:#111">0.87</div>
<div style="left:604px;top:612px;width:57px;height:27px;line-height:27px;text-align:center;font-size:12px;color:#111">6.95</div>
<div style="left:662px;top:612px;width:59px;height:27px;line-height:27px;text-align:center;font-size:12px;color:#111">4.24</div>
<div style="left:722px;top:612px;width:59px;height:27px;line-height:27px;text-align:center;font-size:12px;color:#111">1.43</div>
<div style="left:782px;top:612px;width:36px;height:27px;line-height:27px;text-align:center;font-size:12px;color:#111;color:#007000"><span class="c">負</span></div>
<div style="left:819px;top:612px;width:36px;height:27px;line-height:27px;text-align:center;font-size:12px;color:#111;color:#007000"><span class="c">輸</span></div>
<div style="left:856px;top:612px;width:53px;height:27px;line-height:27px;text-align:center;font-size:12px;color:#111;color:#007000"><span class="c">小</span></div>
<div style="left:1px;top:640px;width:68px;height:27px;line-height:27px;text-align:center;font-size:12px;color:#fff"><span class="c">非国锦标</span></div>
<div style="left:70px;top:640px;width:70px;height:27px;line-height:27px;text-align:center;font-size:12px;color:#111">25-08-17</div>
<div style="left:141px;top:640px;width:147px;height:27px;line-height:27px;text-align:center;font-size:12px;color:#111;color:#007000"><span class="c">赞比亚</span></div>
<div style="left:289px;top:640px;width:81px;height:27px;line-height:27px;text-align:center;font-size:12px;color:#111"><span style="color:#ff0000">0-1</span>(0-0)</div>
<div style="left:371px;top:640px;width:36px;height:27px;line-height:27px;text-align:center;font-size:12px;color:#111">2-7</div>
<div style="left:408px;top:640px;width:51px;height:27px;line-height:27px;text-align:center;font-size:12px;color:#111"><span class="c">肯尼亚</span></div>
<div style="left:460px;top:640px;width:36px;height:27px;line-height:27px;text-align:center;font-size:12px;color:#111">1.00</div>
<div style="left:497px;top:640px;width:68px;height:27px;line-height:27px;text-align:center;font-size:12px;color:#111"><span style="color:#ff0000">*</span><span class="c">平</span>/<span class="c">半</span></div>
<div style="left:566px;top:640px;width:37px;height:27px;line-height:27px;text-align:center;font-size:12px;color:#111">0.82</div>
<div style="left:604px;top:640px;width:57px;height:27px;line-height:27px;text-align:center;font-size:12px;color:#111">3.34</div>
<div style="left:662px;top:640px;width:59px;height:27px;line-height:27px;text-align:center;font-size:12px;color:#111">2.83</div>
<div style="left:722px;top:640px;width:59px;height:27px;line-height:27px;text-align:center;font-size:12px;color:#111">2.29</div>
<div style="left:782px;top:640px;width:36px;height:27px;line-height:27px;text-align:center;font-size:12px;color:#111;color:#007000"><span class="c">負</span></div>
<div style="left:819px;top:640px;width:36px;height:27px;line-height:27px;text-align:center;font-size:12px;color:#111;color:#007000"><span class="c">輸</span></div>
<div style="left:856px;top:640px;width:53px;height:27px;line-height:27px;text-align:center;font-size:12px;color:#111;color:#007000"><span class="c">小</span></div>
<div style="left:1px;top:668px;width:68px;height:27px;line-height:27px;text-align:center;font-size:12px;color:#fff"><span class="c">非国锦标</span></div>
<div style="left:70px;top:668px;width:70px;height:27px;line-height:27px;text-align:center;font-size:12px;color:#111">25-08-14</div>
<div style="left:141px;top:668px;width:147px;height:27px;line-height:27px;text-align:center;font-size:12px;color:#111"><span class="c">摩洛哥</span></div>
<div style="left:289px;top:668px;width:81px;height:27px;line-height:27px;text-align:center;font-size:12px;color:#111"><span style="color:#ff0000">3-1</span>(1-0)</div>
<div style="left:371px;top:668px;width:36px;height:27px;line-height:27px;text-align:center;font-size:12px;color:#111">11-1</div>
<div style="left:408px;top:668px;width:51px;height:27px;line-height:27px;text-align:center;font-size:12px;color:#111;color:#007000"><span class="c">赞比亚</span></div>
<div style="left:460px;top:668px;width:36px;height:27px;line-height:27px;text-align:center;font-size:12px;color:#111">0.97</div>
<div style="left:497px;top:668px;width:68px;height:27px;line-height:27px;text-align:center;font-size:12px;color:#111"><span class="c">球半</span>/<span class="c">两</span></div>
<div style="left:566px;top:668px;width:37px;height:27px;line-height:27px;text-align:center;font-size:12px;color:#111">0.85</div>
<div style="left:604px;top:668px;width:57px;height:27px;line-height:27px;text-align:center;font-size:12px;color:#111">1.32</div>
<div style="left:662px;top:668px;width:59px;height:27px;line-height:27px;text-align:center;font-size:12px;color:#111">4.52</div>
<div style="left:722px;top:668px;width:59px;height:27px;line-height:27px;text-align:center;font-size:12px;color:#111">9.68</div>
<div style="left:782px;top:668px;width:36px;height:27px;line-height:27px;text-align:center;font-size:12px;color:#111;color:#007000"><span class="c">負</span></div>
<div style="left:819px;top:668px;width:36px;height:27px;line-height:27px;text-align:center;font-size:12px;color:#111;color:#007000"><span class="c">輸</span></div>
<div style="left:856px;top:668px;width:53px;height:27px;line-height:27px;text-align:center;font-size:12px;color:#111;color:#ff0000"><span class="c">大</span></div>
<div style="left:1px;top:696px;width:68px;height:27px;line-height:27px;text-align:center;font-size:12px;color:#fff"><span class="c">非国锦标</span></div>
<div style="left:70px;top:696px;width:70px;height:27px;line-height:27px;text-align:center;font-size:12px;color:#111">25-08-10</div>
<div style="left:141px;top:696px;width:147px;height:27px;line-height:27px;text-align:center;font-size:12px;color:#111;color:#007000"><span class="c">赞比亚</span></div>
<div style="left:289px;top:696px;width:81px;height:27px;line-height:27px;text-align:center;font-size:12px;color:#111"><span style="color:#ff0000">1-2</span>(0-0)</div>
<div style="left:371px;top:696px;width:36px;height:27px;line-height:27px;text-align:center;font-size:12px;color:#111">2-6</div>
<div style="left:408px;top:696px;width:51px;height:27px;line-height:27px;text-align:center;font-size:12px;color:#111"><span class="c">安哥拉</span></div>
<div style="left:460px;top:696px;width:36px;height:27px;line-height:27px;text-align:center;font-size:12px;color:#111">0.76</div>
<div style="left:497px;top:696px;width:68px;height:27px;line-height:27px;text-align:center;font-size:12px;color:#111"><span style="color:#ff0000">*</span><span class="c">半球</span></div>
<div style="left:566px;top:696px;width:37px;height:27px;line-height:27px;text-align:center;font-size:12px;color:#111">1.06</div>
<div style="left:604px;top:696px;width:57px;height:27px;line-height:27px;text-align:center;font-size:12px;color:#111">3.70</div>
<div style="left:662px;top:696px;width:59px;height:27px;line-height:27px;text-align:center;font-size:12px;color:#111">2.96</div>
<div style="left:722px;top:696px;width:59px;height:27px;line-height:27px;text-align:center;font-size:12px;color:#111">2.08</div>
<div style="left:782px;top:696px;width:36px;height:27px;line-height:27px;text-align:center;font-size:12px;color:#111;color:#007000"><span class="c">負</span></div>
<div style="left:819px;top:696px;width:36px;height:27px;line-height:27px;text-align:center;font-size:12px;color:#111;color:#007000"><span class="c">輸</span></div>
<div style="left:856px;top:696px;width:53px;height:27px;line-height:27px;text-align:center;font-size:12px;color:#111;color:#ff0000"><span class="c">大</span></div>
<div style="left:1px;top:724px;width:68px;height:27px;line-height:27px;text-align:center;font-size:12px;color:#fff"><span class="c">非国锦标</span></div>
<div style="left:70px;top:724px;width:70px;height:27px;line-height:27px;text-align:center;font-size:12px;color:#111">25-08-07</div>
<div style="left:141px;top:724px;width:147px;height:27px;line-height:27px;text-align:center;font-size:12px;color:#111"><span class="c">刚果民主共和国</span>(<span class="c">中</span>)</div>
<div style="left:289px;top:724px;width:81px;height:27px;line-height:27px;text-align:center;font-size:12px;color:#111"><span style="color:#ff0000">2-0</span>(0-0)</div>
<div style="left:371px;top:724px;width:36px;height:27px;line-height:27px;text-align:center;font-size:12px;color:#111">1-3</div>
<div style="left:408px;top:724px;width:51px;height:27px;line-height:27px;text-align:center;font-size:12px;color:#111;color:#007000"><span class="c">赞比亚</span></div>
<div style="left:460px;top:724px;width:36px;height:27px;line-height:27px;text-align:center;font-size:12px;color:#111">0.90</div>
<div style="left:497px;top:724px;width:68px;height:27px;line-height:27px;text-align:center;font-size:12px;color:#111"><span class="c">平</span>/<span class="c">半</span></div>
<div style="left:566px;top:724px;width:37px;height:27px;line-height:27px;text-align:center;font-size:12px;color:#111">0.92</div>
<div style="left:604px;top:724px;width:57px;height:27px;line-height:27px;text-align:center;font-size:12px;color:#111">2.15</div>
<div style="left:662px;top:724px;width:59px;height:27px;line-height:27px;text-align:center;font-size:12px;color:#111">2.93</div>
<div style="left:722px;top:724px;width:59px;height:27px;line-height:27px;text-align:center;font-size:12px;color:#111">3.58</div>
<div style="left:782px;top:724px;width:36px;height:27px;line-height:27px;text-align:center;font-size:12px;color:#111;color:#007000"><span class="c">負</span></div>
<div style="left:819px;top:724px;width:36px;height:27px;line-height:27px;text-align:center;font-size:12px;color:#111;color:#007000"><span class="c">輸</span></div>
<div style="left:856px;top:724px;width:53px;height:27px;line-height:27px;text-align:center;font-size:12px;color:#111;color:#0000ff"><span class="c">走</span></div>
<div style="left:0px;top:751px;width:1px;height:2px;background:#c0c0c0"></div>
<div style="left:909px;top:751px;width:1px;height:2px;background:#c0c0c0"></div>
<div style="left:480px;top:431px;width:59px;height:20px;background:#fff;border:1px solid #a9a9a9;border-radius:2px;box-sizing:border-box"><span style="position:absolute;left:4px;top:0px;line-height:20px;font-size:13px;color:#000">Crow*</span><svg width="6" height="6" viewBox="0 0 6 6" style="position:absolute;left:45px;top:7px"><path d="M0 0H6L3.0 6Z" fill="#000"/></svg></div>
<div style="left:547px;top:431px;width:36px;height:20px;background:#fff;border:1px solid #a9a9a9;border-radius:2px;box-sizing:border-box"><span style="position:absolute;left:4px;top:-1px;line-height:20px;font-size:12px;color:#000"><span class="c">终</span></span><svg width="6" height="6" viewBox="0 0 6 6" style="position:absolute;left:23px;top:7px"><path d="M0 0H6L3.0 6Z" fill="#000"/></svg></div>
<div style="left:628px;top:431px;width:84px;height:20px;background:#fff;border:1px solid #a9a9a9;border-radius:2px;box-sizing:border-box"><span style="position:absolute;left:4px;top:-1px;line-height:20px;font-size:12px;color:#000"><span class="c">胜平负均值</span></span><svg width="6" height="6" viewBox="0 0 6 6" style="position:absolute;left:71px;top:7px"><path d="M0 0H6L3.0 6Z" fill="#000"/></svg></div>
<div style="left:720px;top:431px;width:36px;height:20px;background:#fff;border:1px solid #a9a9a9;border-radius:2px;box-sizing:border-box"><span style="position:absolute;left:4px;top:-1px;line-height:20px;font-size:12px;color:#000"><span class="c">终</span></span><svg width="6" height="6" viewBox="0 0 6 6" style="position:absolute;left:23px;top:7px"><path d="M0 0H6L3.0 6Z" fill="#000"/></svg></div>
<div style="left:821px;top:431px;width:48px;height:20px;background:#fff;border:1px solid #a9a9a9;border-radius:2px;box-sizing:border-box"><span style="position:absolute;left:4px;top:-1px;line-height:20px;font-size:12px;color:#000"><span class="c">全场</span></span><svg width="6" height="6" viewBox="0 0 6 6" style="position:absolute;left:35px;top:7px"><path d="M0 0H6L3.0 6Z" fill="#000"/></svg></div>
</body></html>
